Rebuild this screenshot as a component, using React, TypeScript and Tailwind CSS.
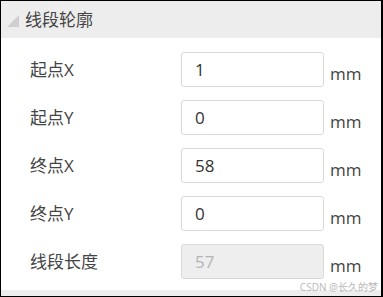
import React from "react";

const rows = [
  { label: "起点X", value: "1" },
  { label: "起点Y", value: "0" },
  { label: "终点X", value: "58" },
  { label: "终点Y", value: "0" },
  { label: "线段长度", value: "57", disabled: true },
];

export default function App() {
  return (
    <div
      className="relative w-[383px] h-[297px] bg-black pt-px pl-px pr-[2px] pb-px"
      style={{ fontFamily: '"Open Sans", "Noto Sans CJK SC", sans-serif' }}
    >
      <div className="flex flex-col h-full bg-white">
        <div className="h-[37px] bg-[#ededed] flex items-center shrink-0">
          <svg width="12" height="12" viewBox="0 0 12 12" className="ml-[6px] mt-[3px]">
            <polygon points="0,12 12,12 12,0" fill="#cfcfcf" />
          </svg>
          <span className="ml-[6px] text-[17px] text-[#444] leading-none">线段轮廓</span>
        </div>
        <div className="flex flex-col gap-[13px] pt-[14px] pl-[29px] flex-1">
          {rows.map((r) => (
            <div key={r.label} className="flex items-center h-[35px]">
              <div className="w-[151px] text-[17px] text-[#444]">{r.label}</div>
              <div
                className={
                  r.disabled
                    ? "w-[143px] h-[35px] rounded-[3px] border border-[#d9d9d9] bg-[#eeeeee] flex items-center pl-[13px] text-[17px] text-[#b5b5b5]"
                    : "w-[143px] h-[35px] rounded-[3px] border border-[#d9d9d9] bg-white flex items-center pl-[13px] text-[17px] text-[#333]"
                }
              >
                {r.value}
              </div>
              <div className="ml-[6px] text-[17px] text-[#444] mt-[8px]">mm</div>
            </div>
          ))}
        </div>
        <div className="h-[6px] bg-[#ededed] shrink-0" />
      </div>
      <div className="absolute right-[5px] bottom-[5px] text-[10px] text-[#b8b8b8] leading-none">
        CSDN @长久的梦
      </div>
    </div>
  );
}
